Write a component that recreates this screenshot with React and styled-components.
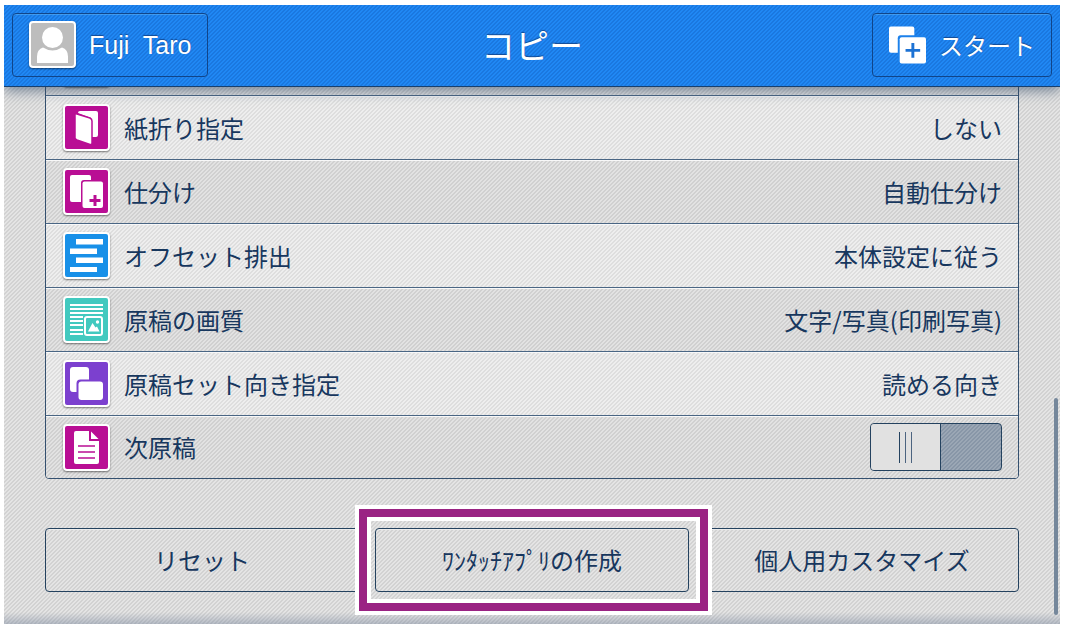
import React, { useState } from "react";
import styled, { createGlobalStyle, css } from "styled-components";
// --------------------------
const GlobalStyle = createGlobalStyle`
  * {
    box-sizing: border-box;
  }
  body {
    margin: 0;
    background: #fff;
    font-family: "Noto Sans CJK JP", "Liberation Sans", sans-serif;
    color: #17375e;
  }
  button, input {
    font: inherit;
    color: inherit;
  }
`;

// fine diagonal weave, repeats every 4px
const weave = (dark, light) => css`
  background-image: linear-gradient(
    135deg,
    ${dark} 25%,
    ${light} 25% 50%,
    ${dark} 50% 75%,
    ${light} 75%
  );
  background-size: 4px 4px;
`;

const Screen = styled.div`
  display: flex;
  flex-direction: column;
  height: calc(100vh - 9px);
  margin: 5px 5px 4px 4px;
  position: relative;
  overflow: hidden;
  ${weave("#d2d2d2", "#e4e4e4")}
`;

const Header = styled.header`
  display: grid;
  grid-template-columns: 1fr auto 1fr;
  align-items: center;
  height: 82px;
  flex-shrink: 0;
  padding: 0 8px 2px;
  color: #fff;
  text-shadow: 0 -1px 1px #124a94;
  border-bottom: 1px solid #17406f;
  ${weave("#1a78e0", "#2088f4")}
  box-shadow: 0 4px 12px rgba(50, 75, 105, 0.6);
  z-index: 1;
`;

const HeaderButton = styled.button`
  display: flex;
  align-items: center;
  gap: 13px;
  height: 64px;
  padding: 0 16px;
  font-size: 24px;
  line-height: 32px;
  background: none;
  border: 1px solid #10458a;
  border-radius: 4px;
  box-shadow: inset 0 1px 0 rgba(100, 180, 240, 0.5);
  text-shadow: inherit;
  justify-self: ${({ $end }) => ($end ? "end" : "start")};
  cursor: pointer;
`;

const UserName = styled.span`
  font-family: "Liberation Sans", sans-serif;
  font-size: 25px;
  white-space: pre;
`;

const Title = styled.h1`
  margin: 0;
  font-size: 34px;
  font-weight: 400;
  line-height: 36px;
`;

const Scroller = styled.main`
  display: flex;
  flex: 1;
  flex-direction: column;
  justify-content: flex-end;
  min-height: 0;
  overflow: hidden;
  padding: 0 41px 32px;
`;

const List = styled.ul`
  margin: 0 0 49px;
  padding: 0;
  list-style: none;
  border: 1px solid #34506f;
  border-radius: 4px;
  overflow: hidden;
  flex-shrink: 0;
`;

const Row = styled.li`
  display: flex;
  align-items: center;
  gap: 14px;
  height: 64px;
  padding: 0 16px 0 17px;
  font-size: 24px;
  line-height: 32px;
  ${weave("#dedede", "#eeeeee")}
  box-shadow: inset 0 1px 0 #f8f8f8;

  &:nth-child(odd) {
    ${weave("#d0d0d0", "#e2e2e2")}
  }
  & + & {
    border-top: 1px solid #4a6684;
  }
  &:last-child {
    height: 63px;
  }
`;

const Tile = styled.span`
  display: flex;
  flex-shrink: 0;
  width: 47px;
  height: 47px;
  border: 2px solid #fff;
  border-radius: 4px;
  background: ${({ $color }) => $color};
  box-shadow: 0 1px 2px rgba(0, 0, 0, 0.5);

  svg {
    width: 43px;
    height: 43px;
  }
`;

const Label = styled.label`
  flex: 1;
`;

const Toggle = styled.input`
  appearance: none;
  display: flex;
  width: 132px;
  height: 48px;
  margin: 0;
  border: 1px solid #24425f;
  border-radius: 4px;
  overflow: hidden;
  ${weave("#8896a7", "#9ba7b5")}
  cursor: pointer;

  &::before {
    content: "";
    width: 69px;
    border-right: 1px solid #24425f;
    background:
      linear-gradient(#24425f, #24425f) 28px center / 1px 31px no-repeat,
      linear-gradient(#4c6480, #4c6480) 34px center / 1px 31px no-repeat,
      linear-gradient(#4c6480, #4c6480) 40px center / 1px 31px no-repeat,
      #e1e1e1;
  }
  &:checked {
    justify-content: flex-end;
  }
`;

const Actions = styled.div`
  display: grid;
  grid-template-columns: repeat(3, 1fr);
  gap: 16px;
  flex-shrink: 0;
`;

const Action = styled.div`
  position: relative;
  display: flex;
`;

const ActionButton = styled.button`
  flex: 1;
  height: 64px;
  padding: 0;
  font-size: 24px;
  line-height: 32px;
  background: none;
  border: 1px solid #24425f;
  border-radius: 4px;
  box-shadow: inset 0 1px 0 #ececec;
  cursor: pointer;
`;

const Highlight = styled.span`
  position: absolute;
  inset: -19px -19px -19px -16px;
  z-index: 1;
  border: 8px solid #9a2383;
  box-shadow: 0 0 0 4px #fff, inset 0 0 0 4px #fff;
  pointer-events: none;
`;

const Thumb = styled.span`
  position: absolute;
  right: 2px;
  bottom: 9px;
  width: 4px;
  height: 35%;
  border-radius: 2px;
  background: #75879b;
`;

const BottomShade = styled.span`
  position: absolute;
  inset: auto 0 0;
  height: 12px;
  background: linear-gradient(rgba(110, 125, 150, 0), rgba(110, 125, 150, 0.4));
  pointer-events: none;
`;
// --------------------------
const FoldIcon = () => (
  <svg viewBox="0 0 43 43">
    <path d="M15 5h16a2 2 0 0 1 2 2v22a2 2 0 0 1-2 2h-5V12L13 7q0-2 2-2z" fill="#fff" />
    <path
      d="M10 9q0-2 2-1l13 4q2 1 2 3v22q0 2-2 1.500L12 34q-2-1-2-2z"
      fill="#fff"
      stroke="#b90e94"
      strokeWidth="1.500"
    />
  </svg>
);

const SortIcon = () => (
  <svg viewBox="0 0 43 43">
    <rect x="5" y="5" width="21" height="27" rx="2" fill="#fff" />
    <rect x="16" y="10" width="23" height="29" rx="3" fill="#b90e94" />
    <rect x="17.500" y="11.500" width="20.500" height="26.500" rx="2" fill="#fff" />
    <path d="M30 25v11M24.500 30.500h11" stroke="#b90e94" strokeWidth="3" />
  </svg>
);

const OffsetIcon = () => (
  <svg viewBox="0 0 43 43" fill="#fff">
    <path d="M11 5h27v5.500H11zM5 14.500h27V20H5zM11 23.500h27V29H11zM5 33h27v5H5z" />
  </svg>
);

const QualityIcon = () => (
  <svg viewBox="0 0 43 43" fill="#fff">
    <path d="M5 6h33v2H5zM5 10h33v2H5zM5 14h33v2H5zM5 18h13v2H5zM5 22h13v2H5zM5 26h13v2H5zM5 31h13v2H5zM5 35h13v2H5z" />
    <rect x="20" y="19" width="17" height="18" rx="2" fill="none" stroke="#fff" strokeWidth="2" />
    <path d="m23 33.500 4.500-8.500 3 4.500 1.500-1 2.500 5z" />
    <circle cx="32.500" cy="24" r="1.700" />
  </svg>
);

const DirectionIcon = () => (
  <svg viewBox="0 0 43 43">
    <rect x="5" y="5" width="19" height="25" rx="3" fill="#fff" />
    <rect x="11.500" y="17.500" width="28" height="22" rx="4" fill="#7c40cf" />
    <rect x="13.500" y="19.500" width="24.500" height="18.500" rx="3" fill="#fff" />
  </svg>
);

const DocumentIcon = () => (
  <svg viewBox="0 0 43 43">
    <path d="M11 5h13v10h10v21a2 2 0 0 1-2 2H11a2 2 0 0 1-2-2V7a2 2 0 0 1 2-2z" fill="#fff" />
    <path d="M26 5.500 33.500 13H26z" fill="#fff" />
    <path d="M13 20h17M13 26h17M13 32h17" stroke="#b90e94" strokeWidth="1.500" />
  </svg>
);

const UserIcon = () => (
  <svg viewBox="0 0 43 43" fill="#fff">
    <circle cx="21.500" cy="14.500" r="10.500" />
    <path d="M12 24.500q9.500 6 19 0 6 2 6 9V40H6v-6.500q0-7 6-9z" />
  </svg>
);

const StartIcon = () => (
  <svg width="37" height="38" viewBox="0 0 38 38">
    <rect x="0" y="0" width="26" height="27" rx="2" fill="#fff" />
    <rect x="9" y="9" width="29" height="29" rx="3" fill="#1c81eb" />
    <rect x="11" y="11" width="27" height="27" rx="2" fill="#fff" />
    <path d="M24.500 17v15M17 24.500h15" stroke="#1c72d4" strokeWidth="3" />
  </svg>
);
// --------------------------
const settings = [
  { label: "紙折り指定", value: "しない", color: "#b90e94", Icon: FoldIcon },
  { label: "仕分け", value: "自動仕分け", color: "#b90e94", Icon: SortIcon },
  { label: "オフセット排出", value: "本体設定に従う", color: "#1890e8", Icon: OffsetIcon },
  { label: "原稿の画質", value: "文字/写真(印刷写真)", color: "#42c9bf", Icon: QualityIcon },
  { label: "原稿セット向き指定", value: "読める向き", color: "#7c40cf", Icon: DirectionIcon },
];

const App = () => {
  const [nextOriginal, setNextOriginal] = useState(false);

  return (
    <Screen>
      <GlobalStyle />
      <Header>
        <HeaderButton>
          <Tile $color="#bdbdbd">
            <UserIcon />
          </Tile>
          <UserName>{"Fuji  Taro"}</UserName>
        </HeaderButton>
        <Title>コピー</Title>
        <HeaderButton $end>
          <StartIcon />
          スタート
        </HeaderButton>
      </Header>
      <Scroller>
        <List>
          <Row>
            <Tile $color="#bdbdbd" />
          </Row>
          {settings.map(({ label, value, color, Icon }) => (
            <Row key={label}>
              <Tile $color={color}>
                <Icon />
              </Tile>
              <Label as="span">{label}</Label>
              <span>{value}</span>
            </Row>
          ))}
          <Row>
            <Tile $color="#b90e94">
              <DocumentIcon />
            </Tile>
            <Label htmlFor="next-original">次原稿</Label>
            <Toggle
              id="next-original"
              type="checkbox"
              role="switch"
              checked={nextOriginal}
              onChange={(e) => setNextOriginal(e.target.checked)}
            />
          </Row>
        </List>
        <Actions>
          <Action>
            <ActionButton>リセット</ActionButton>
          </Action>
          <Action>
            <ActionButton>ﾜﾝﾀｯﾁｱﾌﾟﾘの作成</ActionButton>
            <Highlight />
          </Action>
          <Action>
            <ActionButton>個人用カスタマイズ</ActionButton>
          </Action>
        </Actions>
      </Scroller>
      <BottomShade />
      <Thumb />
    </Screen>
  );
};
// --------------------------
export default App;
